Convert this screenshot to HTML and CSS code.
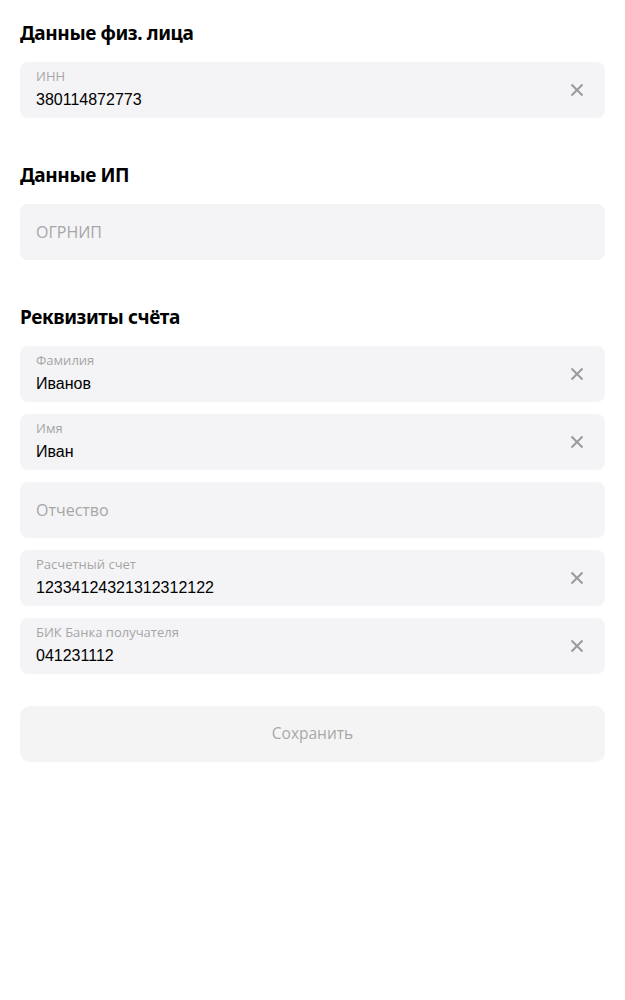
FILE: index.html
```html
<!DOCTYPE html>
<html lang="ru">
<head>
<meta charset="utf-8">
<link rel="stylesheet" href="styles.css">
</head>
<body>
<main class="page">
  <section class="section">
    <h2 class="title">Данные физ. лица</h2>
    <div class="fields">
      <div class="field">
        <div class="field-body">
          <span class="label">ИНН</span>
          <span class="value">380114872773</span>
        </div>
        <span class="clear"><svg width="14" height="14" viewBox="0 0 14 14"><path d="M1.5 1.5L12.5 12.5M12.5 1.5L1.5 12.5" stroke="#9a9a9a" stroke-width="2"/></svg></span>
      </div>
    </div>
  </section>
  <section class="section">
    <h2 class="title">Данные ИП</h2>
    <div class="fields">
      <div class="field">
        <div class="field-body center">
          <span class="placeholder">ОГРНИП</span>
        </div>
      </div>
    </div>
  </section>
  <section class="section">
    <h2 class="title">Реквизиты счёта</h2>
    <div class="fields">
      <div class="field">
        <div class="field-body">
          <span class="label">Фамилия</span>
          <span class="value">Иванов</span>
        </div>
        <span class="clear"><svg width="14" height="14" viewBox="0 0 14 14"><path d="M1.5 1.5L12.5 12.5M12.5 1.5L1.5 12.5" stroke="#9a9a9a" stroke-width="2"/></svg></span>
      </div>
      <div class="field">
        <div class="field-body">
          <span class="label">Имя</span>
          <span class="value">Иван</span>
        </div>
        <span class="clear"><svg width="14" height="14" viewBox="0 0 14 14"><path d="M1.5 1.5L12.5 12.5M12.5 1.5L1.5 12.5" stroke="#9a9a9a" stroke-width="2"/></svg></span>
      </div>
      <div class="field">
        <div class="field-body center">
          <span class="placeholder">Отчество</span>
        </div>
      </div>
      <div class="field">
        <div class="field-body">
          <span class="label">Расчетный счет</span>
          <span class="value">12334124321312312122</span>
        </div>
        <span class="clear"><svg width="14" height="14" viewBox="0 0 14 14"><path d="M1.5 1.5L12.5 12.5M12.5 1.5L1.5 12.5" stroke="#9a9a9a" stroke-width="2"/></svg></span>
      </div>
      <div class="field">
        <div class="field-body">
          <span class="label">БИК Банка получателя</span>
          <span class="value">041231112</span>
        </div>
        <span class="clear"><svg width="14" height="14" viewBox="0 0 14 14"><path d="M1.5 1.5L12.5 12.5M12.5 1.5L1.5 12.5" stroke="#9a9a9a" stroke-width="2"/></svg></span>
      </div>
    </div>
  </section>
  <button class="save" type="button">Сохранить</button>
</main>
</body>
</html>
```

FILE: styles.css
```css
* { box-sizing: border-box; }
html, body { margin: 0; padding: 0; background: #fff; }
body { font-family: "Liberation Sans", Arial, sans-serif; color: #000; }
.page {
  padding: 21px 20px 0;
  display: flex;
  flex-direction: column;
}
.section { display: flex; flex-direction: column; margin-bottom: 45px; }
.section:last-of-type { margin-bottom: 32px; }
.title {
  margin: 0 0 17px;
  font-family: "Noto Sans", "Open Sans", sans-serif;
  font-weight: 700;
  font-size: 19px;
  line-height: 24px;
  letter-spacing: -0.4px;
  color: #000;
}
.fields { display: flex; flex-direction: column; gap: 12px; }
.field {
  height: 56px;
  background: #f4f4f6;
  border-radius: 8px;
  display: flex;
  align-items: stretch;
  padding: 0 16px;
}
.field-body {
  flex: 1;
  display: flex;
  flex-direction: column;
  justify-content: flex-start;
  padding-top: 6px;
}
.field-body.center {
  justify-content: center;
  padding-top: 0;
}
.label {
  font-family: "Open Sans", "Noto Sans", sans-serif;
  font-size: 13px;
  line-height: 16px;
  color: #a6a6a6;
  margin-bottom: 6px;
}
.value {
  font-size: 16px;
  line-height: 20px;
  color: #000;
}
.placeholder {
  font-family: "Open Sans", "Noto Sans", sans-serif;
  font-size: 16px;
  line-height: 20px;
  color: #a6a6a6;
}
.clear {
  width: 24px;
  display: flex;
  align-items: center;
  justify-content: center;
}
.save {
  height: 56px;
  border: none;
  border-radius: 10px;
  background: #f4f4f4;
  font-family: "Open Sans", "Noto Sans", sans-serif;
  font-size: 15.5px;
  line-height: 20px;
  color: #a8a8a8;
  padding: 0 0 2px;
}
```
